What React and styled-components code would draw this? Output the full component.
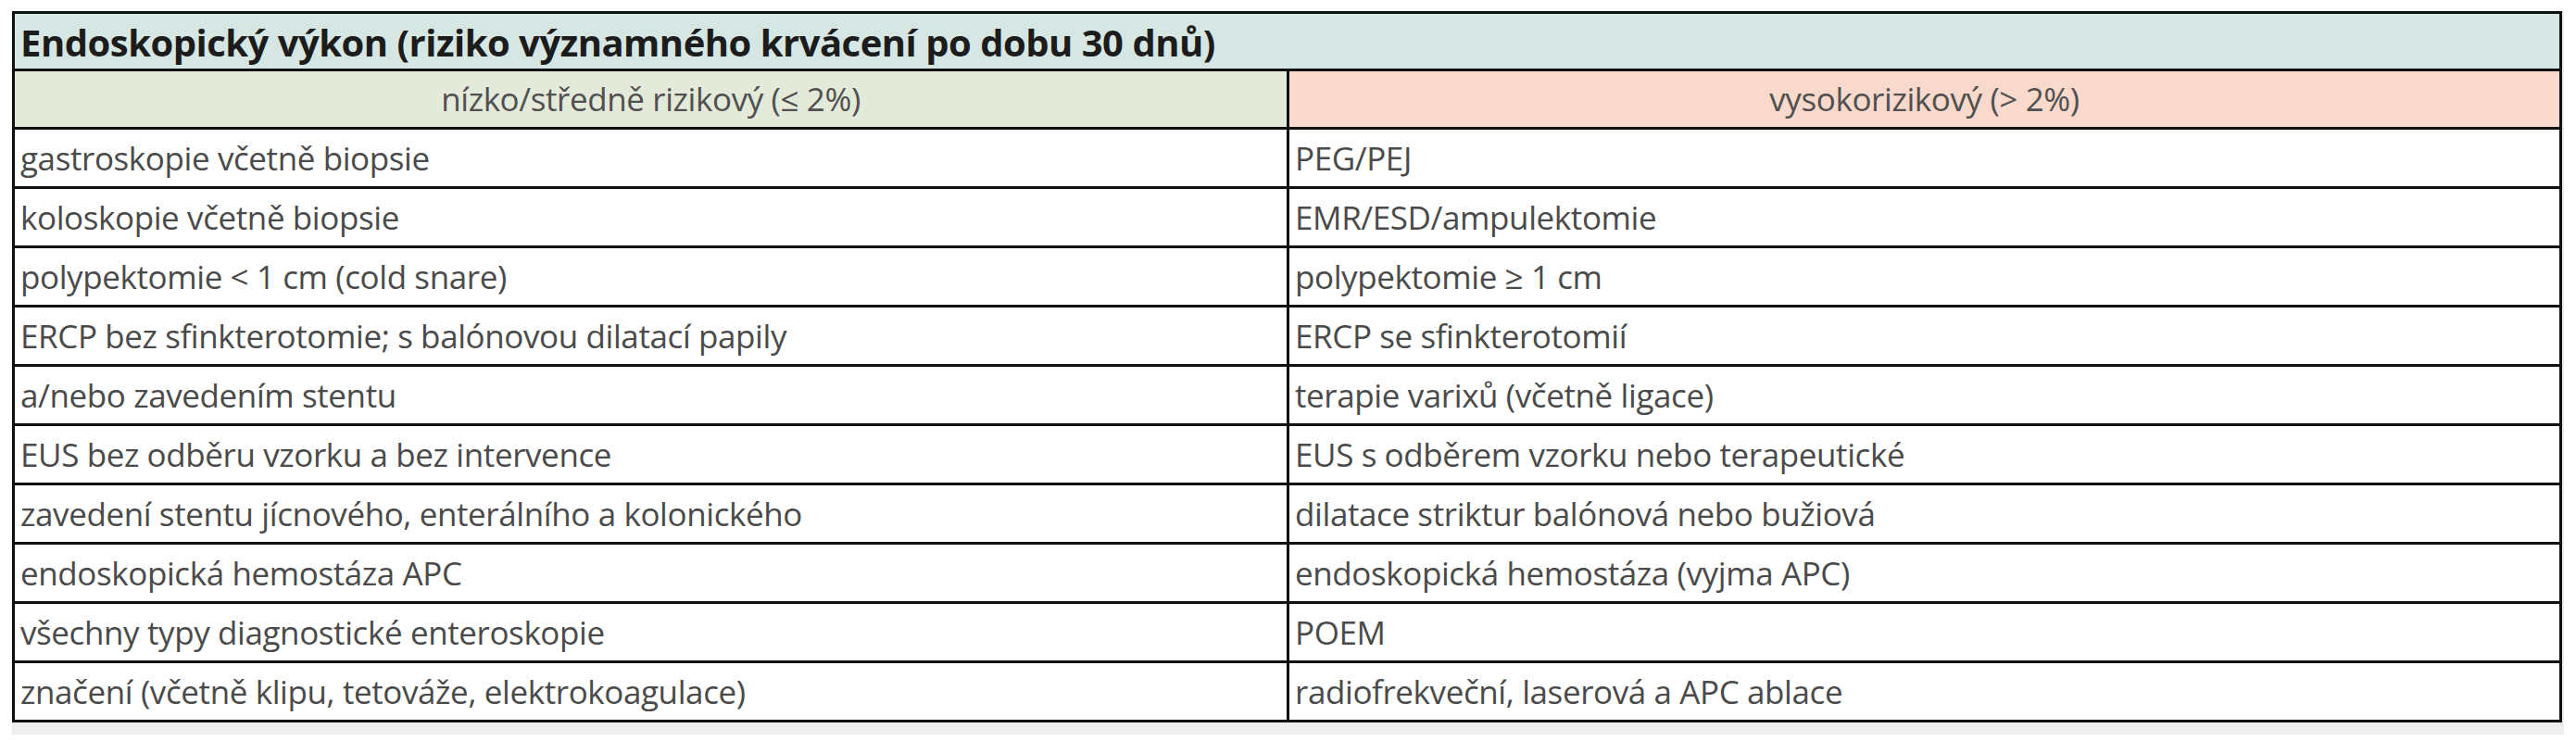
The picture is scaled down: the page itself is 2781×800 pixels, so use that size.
import React from 'react';
import styled, { createGlobalStyle } from 'styled-components';

const GlobalStyle = createGlobalStyle`
  html, body {
    margin: 0;
    padding: 0;
    background: #ffffff;
  }
`;

const Page = styled.div`
  padding: 12px 0 0 13px;
  font-family: "Open Sans", "Noto Sans", sans-serif;
`;

const Sheet = styled.div`
  width: 2755px;
  background: #eeeeee;
  padding-bottom: 13px;
`;

const Table = styled.table`
  width: 2753px;
  border-collapse: collapse;
  table-layout: fixed;
  border: 3px solid #111;
  background: #fff;
`;

const TitleCell = styled.th`
  height: 57px;
  padding: 2px 6px 0;
  text-align: left;
  background: #d6e6e2;
  color: #1c1c1c;
  font-size: 40px;
  line-height: 1.2;
  font-weight: 700;
  letter-spacing: -0.5px;
  border: 3px solid #111;
`;

const HeadCell = styled.th`
  height: 60px;
  padding: 0 6px;
  text-align: center;
  font-weight: 400;
  font-size: 35px;
  line-height: 1.2;
  color: #505050;
  letter-spacing: -0.4px;
  background: ${({ tone }) => (tone === 'high' ? '#f9d9cb' : '#e4eada')};
  border: 3px solid #111;
`;

const Cell = styled.td`
  height: 61px;
  padding: 0 6px;
  font-size: 35px;
  line-height: 1.2;
  color: #4a4a4a;
  letter-spacing: -0.4px;
  white-space: nowrap;
  border: 3px solid #111;
`;

const rows = [
  ['gastroskopie včetně biopsie', 'PEG/PEJ'],
  ['koloskopie včetně biopsie', 'EMR/ESD/ampulektomie'],
  ['polypektomie < 1 cm (cold snare)', 'polypektomie ≥ 1 cm'],
  ['ERCP bez sfinkterotomie; s balónovou dilatací papily', 'ERCP se sfinkterotomií'],
  ['a/nebo zavedením stentu', 'terapie varixů (včetně ligace)'],
  ['EUS bez odběru vzorku a bez intervence', 'EUS s odběrem vzorku nebo terapeutické'],
  ['zavedení stentu jícnového, enterálního a kolonického', 'dilatace striktur balónová nebo bužiová'],
  ['endoskopická hemostáza APC', 'endoskopická hemostáza (vyjma APC)'],
  ['všechny typy diagnostické enteroskopie', 'POEM'],
  ['značení (včetně klipu, tetováže, elektrokoagulace)', 'radiofrekveční, laserová a APC ablace'],
];

export default function App() {
  return (
    <>
      <GlobalStyle />
      <Page>
        <Sheet>
          <Table>
            <colgroup>
              <col style={{ width: '1376px' }} />
              <col />
            </colgroup>
            <thead>
              <tr>
                <TitleCell colSpan={2}>
                  Endoskopický výkon (riziko významného krvácení po dobu 30 dnů)
                </TitleCell>
              </tr>
              <tr>
                <HeadCell tone="low">nízko/středně rizikový (≤ 2%)</HeadCell>
                <HeadCell tone="high">vysokorizikový (&gt; 2%)</HeadCell>
              </tr>
            </thead>
            <tbody>
              {rows.map(([low, high]) => (
                <tr key={low}>
                  <Cell>{low}</Cell>
                  <Cell>{high}</Cell>
                </tr>
              ))}
            </tbody>
          </Table>
        </Sheet>
      </Page>
    </>
  );
}
